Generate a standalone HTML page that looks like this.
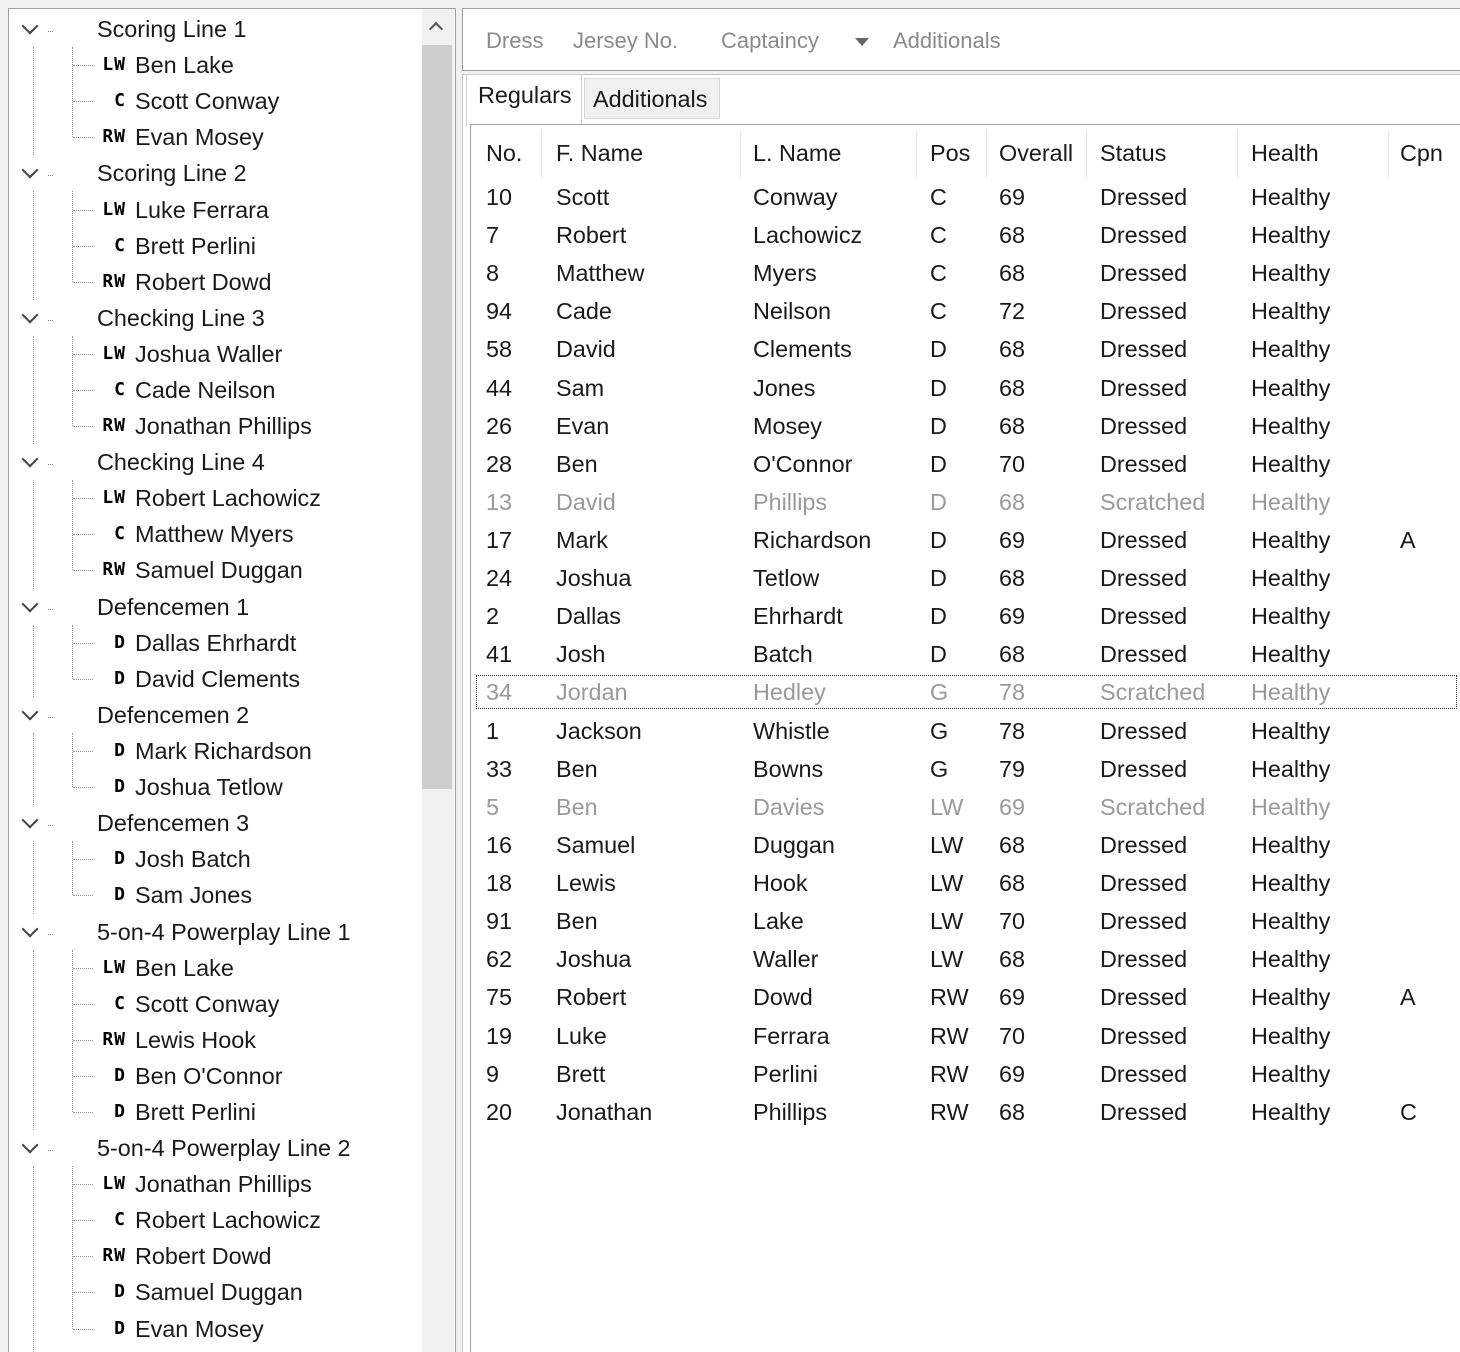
<!DOCTYPE html>
<html><head><meta charset="utf-8"><style>
*{margin:0;padding:0;box-sizing:border-box}
html{width:1460px;height:1352px;overflow:hidden}
body{width:1460px;height:1352px;background:#f0f0f0;position:relative;overflow:hidden;font-family:"Liberation Sans",sans-serif;font-size:23.4px;color:#1a1a1a}
.abs{position:absolute}
#left{left:8px;top:8px;width:448px;height:1344px;background:#fff;border:1px solid #a0a0a0;border-bottom:none}
.g,.c{position:absolute;height:30px;line-height:30px;white-space:nowrap}
.g{left:97px}
.c{left:135px}
.chev{position:absolute;left:24px;width:12px;height:12px;border-right:2.5px solid #444;border-bottom:2.5px solid #444;transform:rotate(45deg)}
.gd{position:absolute;left:48px;width:5px;border-top:1px dotted #888}
.vl{position:absolute;border-left:1px dotted #999;width:0}
.hl{position:absolute;left:73px;width:20px;border-top:1px dotted #999;height:0}
.b{position:absolute;width:42px;left:84px;text-align:right;font-family:"DejaVu Sans Mono","Liberation Mono",monospace;font-weight:bold;font-size:18px;letter-spacing:1px;height:30px;line-height:30px;color:#000}
#tb{left:462px;top:8px;width:998px;height:63px;background:#fff;border:1px solid #a0a0a0;border-right:none}
#tb span{position:absolute;top:19px;color:#8a8a8a;font-size:22px}
#tabs{left:462px;top:74px;width:998px;height:1278px;background:#fff;border:1px solid #c8c8c8;border-right:none;border-bottom:none}
#grid{left:470px;top:124px;width:990px;height:1228px;background:#fff;border:1px solid #a0a0a0;border-right:none;border-bottom:none}
.r{position:absolute;left:0;width:1460px;height:30px;line-height:30px}
.r span{position:absolute;white-space:nowrap}
.a{left:486px}.f{left:556px}.l{left:753px}.p{left:930px}.o{left:999px}.s{left:1100px}.h{left:1251px}.k{left:1400px}
.gr{color:#9a9a9a}
.hs{position:absolute;top:130px;height:48px;border-left:1px solid #e5e5e5}
</style></head><body>
<div id="left" class="abs"></div>
<div class="abs" style="left:422px;top:9px;width:32px;height:1343px;background:#f0f0f0"></div>
<div class="abs" style="left:422px;top:45px;width:30px;height:744px;background:#cdcdcd"></div>
<div class="abs" style="left:431px;top:24px;width:10px;height:10px;border-left:2.5px solid #555;border-top:2.5px solid #555;transform:rotate(45deg)"></div>

<div class="chev" style="top:20px"></div><div class="gd" style="top:31px"></div><div class="g" style="top:14px">Scoring Line 1</div>
<div class="vl" style="left:33px;top:47px;height:108px"></div><div class="vl" style="left:72px;top:47px;height:90px"></div>
<div class="hl" style="top:65px"></div><div class="b" style="top:50px">LW</div><div class="c" style="top:50px">Ben Lake</div>
<div class="hl" style="top:101px"></div><div class="b" style="top:86px">C</div><div class="c" style="top:86px">Scott Conway</div>
<div class="hl" style="top:137px"></div><div class="b" style="top:122px">RW</div><div class="c" style="top:122px">Evan Mosey</div>

<div class="chev" style="top:164px"></div><div class="gd" style="top:175px"></div><div class="g" style="top:158px">Scoring Line 2</div>
<div class="vl" style="left:33px;top:191px;height:109px"></div><div class="vl" style="left:72px;top:191px;height:91px"></div>
<div class="hl" style="top:210px"></div><div class="b" style="top:195px">LW</div><div class="c" style="top:195px">Luke Ferrara</div>
<div class="hl" style="top:246px"></div><div class="b" style="top:231px">C</div><div class="c" style="top:231px">Brett Perlini</div>
<div class="hl" style="top:282px"></div><div class="b" style="top:267px">RW</div><div class="c" style="top:267px">Robert Dowd</div>

<div class="chev" style="top:309px"></div><div class="gd" style="top:320px"></div><div class="g" style="top:303px">Checking Line 3</div>
<div class="vl" style="left:33px;top:336px;height:108px"></div><div class="vl" style="left:72px;top:336px;height:90px"></div>
<div class="hl" style="top:354px"></div><div class="b" style="top:339px">LW</div><div class="c" style="top:339px">Joshua Waller</div>
<div class="hl" style="top:390px"></div><div class="b" style="top:375px">C</div><div class="c" style="top:375px">Cade Neilson</div>
<div class="hl" style="top:426px"></div><div class="b" style="top:411px">RW</div><div class="c" style="top:411px">Jonathan Phillips</div>

<div class="chev" style="top:453px"></div><div class="gd" style="top:464px"></div><div class="g" style="top:447px">Checking Line 4</div>
<div class="vl" style="left:33px;top:480px;height:109px"></div><div class="vl" style="left:72px;top:480px;height:90px"></div>
<div class="hl" style="top:498px"></div><div class="b" style="top:483px">LW</div><div class="c" style="top:483px">Robert Lachowicz</div>
<div class="hl" style="top:534px"></div><div class="b" style="top:519px">C</div><div class="c" style="top:519px">Matthew Myers</div>
<div class="hl" style="top:570px"></div><div class="b" style="top:555px">RW</div><div class="c" style="top:555px">Samuel Duggan</div>

<div class="chev" style="top:598px"></div><div class="gd" style="top:609px"></div><div class="g" style="top:592px">Defencemen 1</div>
<div class="vl" style="left:33px;top:625px;height:72px"></div><div class="vl" style="left:72px;top:625px;height:54px"></div>
<div class="hl" style="top:643px"></div><div class="b" style="top:628px">D</div><div class="c" style="top:628px">Dallas Ehrhardt</div>
<div class="hl" style="top:679px"></div><div class="b" style="top:664px">D</div><div class="c" style="top:664px">David Clements</div>

<div class="chev" style="top:706px"></div><div class="gd" style="top:717px"></div><div class="g" style="top:700px">Defencemen 2</div>
<div class="vl" style="left:33px;top:733px;height:72px"></div><div class="vl" style="left:72px;top:733px;height:54px"></div>
<div class="hl" style="top:751px"></div><div class="b" style="top:736px">D</div><div class="c" style="top:736px">Mark Richardson</div>
<div class="hl" style="top:787px"></div><div class="b" style="top:772px">D</div><div class="c" style="top:772px">Joshua Tetlow</div>

<div class="chev" style="top:814px"></div><div class="gd" style="top:825px"></div><div class="g" style="top:808px">Defencemen 3</div>
<div class="vl" style="left:33px;top:841px;height:73px"></div><div class="vl" style="left:72px;top:841px;height:54px"></div>
<div class="hl" style="top:859px"></div><div class="b" style="top:844px">D</div><div class="c" style="top:844px">Josh Batch</div>
<div class="hl" style="top:895px"></div><div class="b" style="top:880px">D</div><div class="c" style="top:880px">Sam Jones</div>

<div class="chev" style="top:923px"></div><div class="gd" style="top:934px"></div><div class="g" style="top:917px">5-on-4 Powerplay Line 1</div>
<div class="vl" style="left:33px;top:950px;height:180px"></div><div class="vl" style="left:72px;top:950px;height:162px"></div>
<div class="hl" style="top:968px"></div><div class="b" style="top:953px">LW</div><div class="c" style="top:953px">Ben Lake</div>
<div class="hl" style="top:1004px"></div><div class="b" style="top:989px">C</div><div class="c" style="top:989px">Scott Conway</div>
<div class="hl" style="top:1040px"></div><div class="b" style="top:1025px">RW</div><div class="c" style="top:1025px">Lewis Hook</div>
<div class="hl" style="top:1076px"></div><div class="b" style="top:1061px">D</div><div class="c" style="top:1061px">Ben O'Connor</div>
<div class="hl" style="top:1112px"></div><div class="b" style="top:1097px">D</div><div class="c" style="top:1097px">Brett Perlini</div>

<div class="chev" style="top:1139px"></div><div class="gd" style="top:1150px"></div><div class="g" style="top:1133px">5-on-4 Powerplay Line 2</div>
<div class="vl" style="left:33px;top:1166px;height:186px"></div><div class="vl" style="left:72px;top:1166px;height:163px"></div>
<div class="hl" style="top:1184px"></div><div class="b" style="top:1169px">LW</div><div class="c" style="top:1169px">Jonathan Phillips</div>
<div class="hl" style="top:1220px"></div><div class="b" style="top:1205px">C</div><div class="c" style="top:1205px">Robert Lachowicz</div>
<div class="hl" style="top:1256px"></div><div class="b" style="top:1241px">RW</div><div class="c" style="top:1241px">Robert Dowd</div>
<div class="hl" style="top:1292px"></div><div class="b" style="top:1277px">D</div><div class="c" style="top:1277px">Samuel Duggan</div>
<div class="hl" style="top:1329px"></div><div class="b" style="top:1314px">D</div><div class="c" style="top:1314px">Evan Mosey</div>

<div id="tb" class="abs">
<span style="left:23px">Dress</span><span style="left:110px">Jersey No.</span><span style="left:258px">Captaincy</span>
<span style="left:392px;top:29px;width:0;height:0;border-left:7px solid transparent;border-right:7px solid transparent;border-top:8px solid #666"></span>
<span style="left:430px">Additionals</span></div>
<div id="tabs" class="abs"></div>
<div class="abs" style="left:466px;top:74px;width:116px;height:52px;background:#fff;border:1px solid #d0d0d0;border-bottom:none"></div>
<div class="abs" style="left:478px;top:80px;line-height:30px">Regulars</div>
<div class="abs" style="left:584px;top:78px;width:136px;height:41px;background:#f0f0f0;border:1px solid #d8d8d8"></div>
<div class="abs" style="left:593px;top:84px;line-height:30px">Additionals</div>
<div id="grid" class="abs"></div>
<div class="hs" style="left:541px"></div><div class="hs" style="left:740px"></div><div class="hs" style="left:916px"></div><div class="hs" style="left:986px"></div><div class="hs" style="left:1086px"></div><div class="hs" style="left:1237px"></div><div class="hs" style="left:1388px"></div>
<div class="r" style="top:138px"><span class="a">No.</span><span class="f">F. Name</span><span class="l">L. Name</span><span class="p">Pos</span><span class="o">Overall</span><span class="s">Status</span><span class="h">Health</span><span class="k">Cpn</span></div>
<div class="r" style="top:182px"><span class="a">10</span><span class="f">Scott</span><span class="l">Conway</span><span class="p">C</span><span class="o">69</span><span class="s">Dressed</span><span class="h">Healthy</span></div>
<div class="r" style="top:220px"><span class="a">7</span><span class="f">Robert</span><span class="l">Lachowicz</span><span class="p">C</span><span class="o">68</span><span class="s">Dressed</span><span class="h">Healthy</span></div>
<div class="r" style="top:258px"><span class="a">8</span><span class="f">Matthew</span><span class="l">Myers</span><span class="p">C</span><span class="o">68</span><span class="s">Dressed</span><span class="h">Healthy</span></div>
<div class="r" style="top:296px"><span class="a">94</span><span class="f">Cade</span><span class="l">Neilson</span><span class="p">C</span><span class="o">72</span><span class="s">Dressed</span><span class="h">Healthy</span></div>
<div class="r" style="top:334px"><span class="a">58</span><span class="f">David</span><span class="l">Clements</span><span class="p">D</span><span class="o">68</span><span class="s">Dressed</span><span class="h">Healthy</span></div>
<div class="r" style="top:373px"><span class="a">44</span><span class="f">Sam</span><span class="l">Jones</span><span class="p">D</span><span class="o">68</span><span class="s">Dressed</span><span class="h">Healthy</span></div>
<div class="r" style="top:411px"><span class="a">26</span><span class="f">Evan</span><span class="l">Mosey</span><span class="p">D</span><span class="o">68</span><span class="s">Dressed</span><span class="h">Healthy</span></div>
<div class="r" style="top:449px"><span class="a">28</span><span class="f">Ben</span><span class="l">O'Connor</span><span class="p">D</span><span class="o">70</span><span class="s">Dressed</span><span class="h">Healthy</span></div>
<div class="r gr" style="top:487px"><span class="a">13</span><span class="f">David</span><span class="l">Phillips</span><span class="p">D</span><span class="o">68</span><span class="s">Scratched</span><span class="h">Healthy</span></div>
<div class="r" style="top:525px"><span class="a">17</span><span class="f">Mark</span><span class="l">Richardson</span><span class="p">D</span><span class="o">69</span><span class="s">Dressed</span><span class="h">Healthy</span><span class="k">A</span></div>
<div class="r" style="top:563px"><span class="a">24</span><span class="f">Joshua</span><span class="l">Tetlow</span><span class="p">D</span><span class="o">68</span><span class="s">Dressed</span><span class="h">Healthy</span></div>
<div class="r" style="top:601px"><span class="a">2</span><span class="f">Dallas</span><span class="l">Ehrhardt</span><span class="p">D</span><span class="o">69</span><span class="s">Dressed</span><span class="h">Healthy</span></div>
<div class="r" style="top:639px"><span class="a">41</span><span class="f">Josh</span><span class="l">Batch</span><span class="p">D</span><span class="o">68</span><span class="s">Dressed</span><span class="h">Healthy</span></div>
<div class="abs" style="left:476px;top:675px;width:981px;height:34px;border:1px dotted #333"></div>
<div class="r gr" style="top:677px"><span class="a">34</span><span class="f">Jordan</span><span class="l">Hedley</span><span class="p">G</span><span class="o">78</span><span class="s">Scratched</span><span class="h">Healthy</span></div>
<div class="r" style="top:716px"><span class="a">1</span><span class="f">Jackson</span><span class="l">Whistle</span><span class="p">G</span><span class="o">78</span><span class="s">Dressed</span><span class="h">Healthy</span></div>
<div class="r" style="top:754px"><span class="a">33</span><span class="f">Ben</span><span class="l">Bowns</span><span class="p">G</span><span class="o">79</span><span class="s">Dressed</span><span class="h">Healthy</span></div>
<div class="r gr" style="top:792px"><span class="a">5</span><span class="f">Ben</span><span class="l">Davies</span><span class="p">LW</span><span class="o">69</span><span class="s">Scratched</span><span class="h">Healthy</span></div>
<div class="r" style="top:830px"><span class="a">16</span><span class="f">Samuel</span><span class="l">Duggan</span><span class="p">LW</span><span class="o">68</span><span class="s">Dressed</span><span class="h">Healthy</span></div>
<div class="r" style="top:868px"><span class="a">18</span><span class="f">Lewis</span><span class="l">Hook</span><span class="p">LW</span><span class="o">68</span><span class="s">Dressed</span><span class="h">Healthy</span></div>
<div class="r" style="top:906px"><span class="a">91</span><span class="f">Ben</span><span class="l">Lake</span><span class="p">LW</span><span class="o">70</span><span class="s">Dressed</span><span class="h">Healthy</span></div>
<div class="r" style="top:944px"><span class="a">62</span><span class="f">Joshua</span><span class="l">Waller</span><span class="p">LW</span><span class="o">68</span><span class="s">Dressed</span><span class="h">Healthy</span></div>
<div class="r" style="top:982px"><span class="a">75</span><span class="f">Robert</span><span class="l">Dowd</span><span class="p">RW</span><span class="o">69</span><span class="s">Dressed</span><span class="h">Healthy</span><span class="k">A</span></div>
<div class="r" style="top:1021px"><span class="a">19</span><span class="f">Luke</span><span class="l">Ferrara</span><span class="p">RW</span><span class="o">70</span><span class="s">Dressed</span><span class="h">Healthy</span></div>
<div class="r" style="top:1059px"><span class="a">9</span><span class="f">Brett</span><span class="l">Perlini</span><span class="p">RW</span><span class="o">69</span><span class="s">Dressed</span><span class="h">Healthy</span></div>
<div class="r" style="top:1097px"><span class="a">20</span><span class="f">Jonathan</span><span class="l">Phillips</span><span class="p">RW</span><span class="o">68</span><span class="s">Dressed</span><span class="h">Healthy</span><span class="k">C</span></div>
</body></html>
